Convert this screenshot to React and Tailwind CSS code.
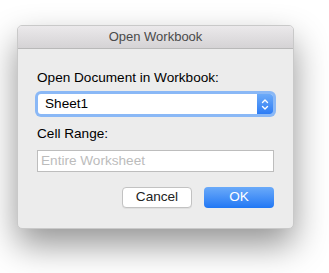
export default function App() {
  const font = { fontFamily: '"Liberation Sans", Arial, sans-serif' };
  return (
    <div className="w-[329px] h-[273px] bg-white overflow-hidden" style={font}>
      <div className="ml-[17px] mt-[25px] w-[277px] h-[204px] rounded-[5px] border border-[#c9c9c9] bg-[#ececec] shadow-[0_16px_34px_rgba(0,0,0,0.42)] flex flex-col overflow-hidden">
        <div className="h-[23px] shrink-0 bg-gradient-to-b from-[#ebe9eb] to-[#d5d3d5] border-b border-[#b9b9b9] flex items-center justify-center text-[13px] text-[#4a4a4a]">
          Open Workbook
        </div>
        <div className="flex flex-col px-[19px] pt-[21px]">
          <div className="text-[13.6px] leading-[16px] text-black">Open Document in Workbook:</div>
          <div className="mt-[8px] ml-[1px] w-[235px] h-[20px] rounded-[3px] bg-white ring-[3px] ring-[#8ab8f6] flex items-stretch">
            <div className="flex-1 flex items-center pl-[7px] text-[13.6px] text-black">Sheet1</div>
            <div className="w-[16px] rounded-r-[3px] bg-gradient-to-b from-[#6caaf8] to-[#2c7cf5] flex items-center justify-center">
              <svg width="8" height="13" viewBox="0 0 8 13" fill="none" stroke="white" strokeWidth="1.4" strokeLinecap="round" strokeLinejoin="round">
                <path d="M1.5 4.5 L4 2 L6.5 4.5" />
                <path d="M1.5 8.5 L4 11 L6.5 8.5" />
              </svg>
            </div>
          </div>
          <div className="mt-[12px] text-[13.6px] leading-[16px] text-black">Cell Range:</div>
          <div className="mt-[8px] w-[237px] h-[22px] bg-white border border-[#bdbdbd] flex items-center pl-[3px] text-[13.6px] text-[#bcbcbc]">
            Entire Worksheet
          </div>
          <div className="mt-[15px] flex justify-end gap-[12px]">
            <div className="w-[70px] h-[21px] rounded-[4px] bg-white border border-[#c2c2c2] shadow-[0_1px_0_rgba(0,0,0,0.05)] flex items-center justify-center text-[13.6px] text-[#222]">
              Cancel
            </div>
            <div className="w-[70px] h-[21px] rounded-[4px] bg-gradient-to-b from-[#6aaaf9] to-[#1f77f4] flex items-center justify-center text-[13.6px] text-white">
              OK
            </div>
          </div>
        </div>
      </div>
    </div>
  );
}
